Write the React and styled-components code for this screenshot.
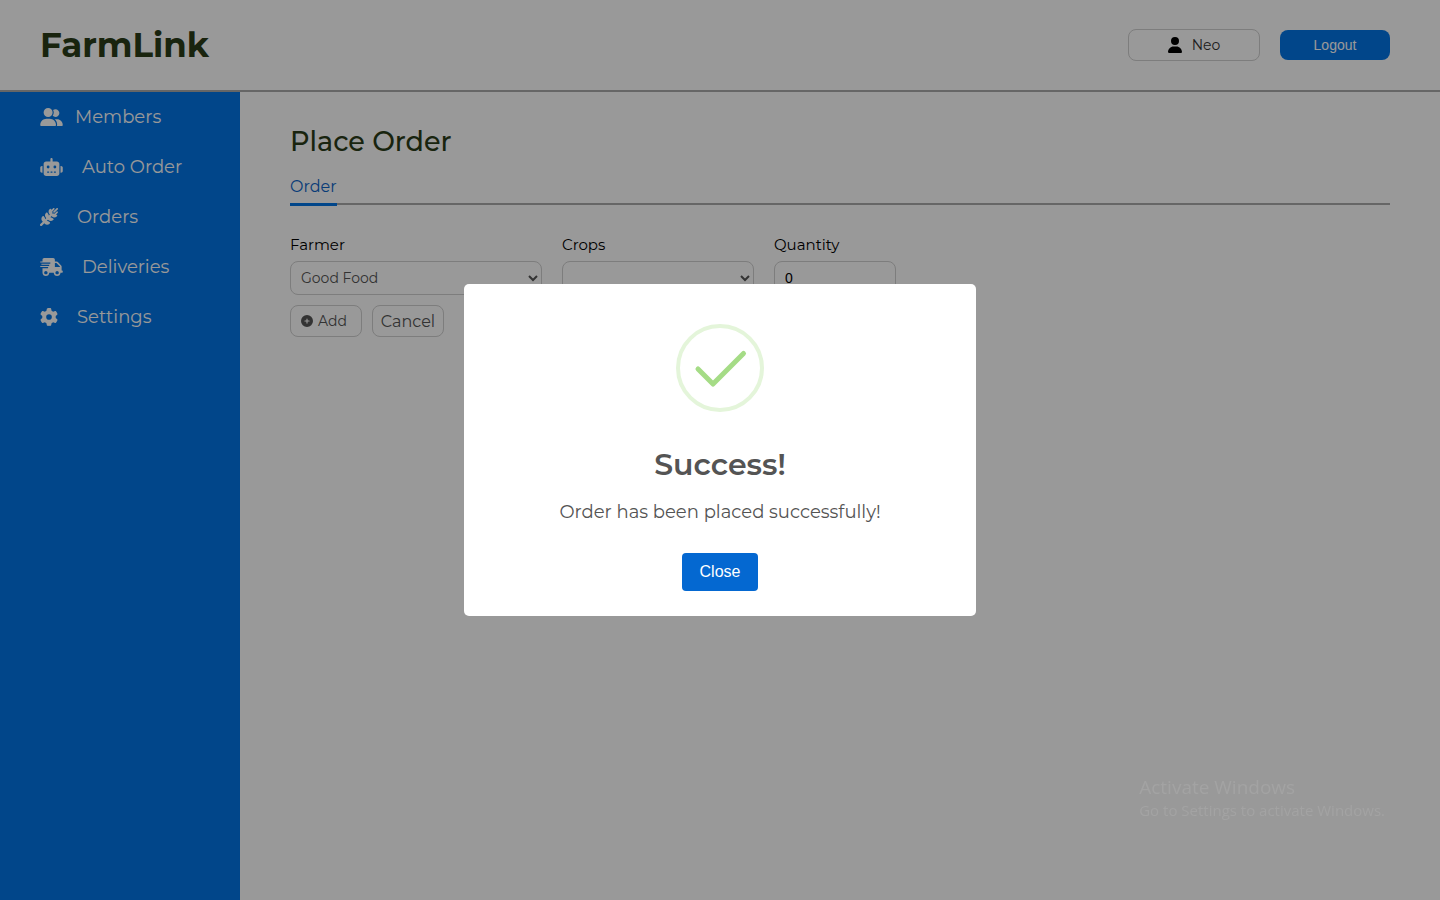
import React from "react";
import styled, { createGlobalStyle } from "styled-components";
import {
  FaUserGroup,
  FaRobot,
  FaWheatAwn,
  FaGear,
  FaUser,
  FaCirclePlus,
} from "react-icons/fa6";
import { FaShippingFast } from "react-icons/fa";

const blue = "#0375e6";
const sans = `Montserrat, Inter, "Noto Sans", sans-serif`;
const system = `"Liberation Sans", Arial, sans-serif`;

const GlobalStyle = createGlobalStyle`
  *, *::before, *::after { box-sizing: border-box; }
  body { margin: 0; background: #fff; font-family: ${sans}; color: #000; }
  button, input, select { margin: 0; font-family: inherit; }
`;

const Page = styled.div`
  min-height: 100vh;
  display: flex;
  flex-direction: column;
`;

const Header = styled.header`
  display: flex;
  align-items: center;
  justify-content: space-between;
  height: 92px;
  padding: 0 50px 0 40px;
  border-bottom: 2px solid #aaa;
`;

const Brand = styled.h1`
  margin: 0;
  font-size: 34px;
  line-height: 44px;
  font-weight: 700;
  color: #2b3c18;
`;

const HeaderActions = styled.div`
  display: flex;
  align-items: center;
  gap: 20px;
`;

const UserButton = styled.button`
  display: flex;
  align-items: center;
  justify-content: center;
  gap: 10px;
  width: 132px;
  height: 32px;
  border: 1px solid #d0d0d0;
  border-radius: 8px;
  background: #fff;
  color: #333;
  font-size: 14px;

  svg { width: 14px; height: 16px; color: #000; }
`;

const LogoutButton = styled.button`
  width: 110px;
  height: 30px;
  border: 0;
  border-radius: 8px;
  background: ${blue};
  color: #fff;
  font-family: ${system};
  font-size: 14px;
`;

const Body = styled.div`
  flex: 1;
  display: flex;
`;

const Sidebar = styled.nav`
  flex: 0 0 240px;
  display: flex;
  flex-direction: column;
  background: ${blue};
`;

const SideLink = styled.a`
  display: flex;
  align-items: center;
  gap: ${(p) => p.$gap}px;
  height: 50px;
  padding: 0 40px;
  color: #fff;
  font-size: 18px;
  line-height: 24px;
  font-weight: 400;
  text-decoration: none;
  white-space: nowrap;

  svg { flex: none; width: ${(p) => (p.$wide ? 23 : 18)}px; height: 18px; }
`;

const Main = styled.main`
  flex: 1;
  min-width: 0;
  padding: 32px 50px;
`;

const Title = styled.h2`
  margin: 0 0 16px;
  font-size: 27px;
  line-height: 36px;
  font-weight: 500;
  color: #2b3c18;
`;

const Tabs = styled.div`
  display: flex;
  height: 29px;
  border-bottom: 2px solid #aaa;
`;

const Tab = styled.a`
  height: 30px;
  border-bottom: 3px solid ${blue};
  color: #0d64c8;
  font-size: 16px;
  line-height: 22px;
  text-decoration: none;
`;

const Form = styled.form`
  margin-top: 30px;
`;

const Fields = styled.div`
  display: grid;
  grid-template-columns: 252px 192px 122px;
  gap: 20px;
`;

const Field = styled.label`
  display: flex;
  flex-direction: column;
  gap: 6px;
  font-size: 15px;
  line-height: 20px;
`;

const control = `
  width: 100%;
  height: 34px;
  border: 1px solid #d0d0d0;
  border-radius: 8px;
  background: #fff;
  font-size: 14px;
`;

const Select = styled.select`
  ${control}
  padding: 0 6px;
  color: #555;
`;

const NumberInput = styled.input`
  ${control}
  padding: 0 10px;
  color: #000;
  font-family: ${system};
`;

const FormActions = styled.div`
  display: flex;
  gap: 10px;
  margin-top: 10px;
`;

const FormButton = styled.button`
  display: flex;
  align-items: center;
  justify-content: ${(p) => (p.$large ? "center" : "flex-start")};
  gap: 5px;
  width: 72px;
  height: 32px;
  padding: 0 ${(p) => (p.$large ? 0 : 10)}px;
  border: 1px solid #d0d0d0;
  border-radius: 8px;
  background: #fff;
  color: #555;
  font-size: ${(p) => (p.$large ? 16 : 14)}px;

  svg { width: 12px; height: 12px; }
`;

const Overlay = styled.div`
  position: fixed;
  inset: 0;
  display: flex;
  align-items: center;
  justify-content: center;
  background: rgba(0, 0, 0, 0.4);
`;

const Dialog = styled.div`
  display: flex;
  flex-direction: column;
  align-items: center;
  width: 512px;
  max-width: 100%;
  padding: 40px 20px 25px;
  border-radius: 5px;
  background: #fff;
  color: #545454;
  text-align: center;
`;

const SuccessIcon = styled.svg`
  width: 88px;
  height: 88px;
`;

const DialogTitle = styled.h2`
  margin: 34px 0 0;
  font-size: 30px;
  line-height: 38px;
  font-weight: 600;
`;

const DialogText = styled.p`
  margin: 16px 0 0;
  font-size: 18px;
  line-height: 24px;
`;

const CloseButton = styled.button`
  width: 76px;
  height: 38px;
  margin-top: 29px;
  padding: 0;
  border: 0;
  border-radius: 4px;
  background: #0468d1;
  color: #fff;
  font-family: ${system};
  font-size: 16px;
`;

const Watermark = styled.aside`
  position: fixed;
  right: 55px;
  bottom: 80px;
  color: #a3a3a3;
  font-family: "Open Sans", "Noto Sans", sans-serif;
  font-size: 15px;
  line-height: 20px;
  pointer-events: none;
`;

const WatermarkTitle = styled.div`
  font-size: 19px;
  line-height: 26px;
`;

const links = [
  { label: "Members", Icon: FaUserGroup, gap: 12, wide: true },
  { label: "Auto Order", Icon: FaRobot, gap: 19, wide: true },
  { label: "Orders", Icon: FaWheatAwn, gap: 19 },
  { label: "Deliveries", Icon: FaShippingFast, gap: 19, wide: true },
  { label: "Settings", Icon: FaGear, gap: 19 },
];

export default function App() {
  return (
    <>
      <GlobalStyle />
      <Page>
        <Header>
          <Brand>FarmLink</Brand>
          <HeaderActions>
            <UserButton type="button"><FaUser />Neo</UserButton>
            <LogoutButton type="button">Logout</LogoutButton>
          </HeaderActions>
        </Header>
        <Body>
          <Sidebar>
            {links.map(({ label, Icon, gap, wide }) => (
              <SideLink key={label} href="#" $gap={gap} $wide={wide}><Icon />{label}</SideLink>
            ))}
          </Sidebar>
          <Main>
            <Title>Place Order</Title>
            <Tabs><Tab href="#">Order</Tab></Tabs>
            <Form>
              <Fields>
                <Field>
                  Farmer
                  <Select defaultValue="good"><option value="good">Good Food</option></Select>
                </Field>
                <Field>
                  Crops
                  <Select defaultValue=""><option value="" /></Select>
                </Field>
                <Field>
                  Quantity
                  <NumberInput type="number" defaultValue="0" />
                </Field>
              </Fields>
              <FormActions>
                <FormButton type="button"><FaCirclePlus />Add</FormButton>
                <FormButton type="button" $large>Cancel</FormButton>
              </FormActions>
            </Form>
          </Main>
        </Body>
      </Page>
      <Overlay>
        <Dialog role="dialog" aria-modal="true" aria-labelledby="dialog-title">
          <SuccessIcon viewBox="0 0 88 88" fill="none" aria-hidden="true">
            <circle cx="44" cy="44" r="42" stroke="#e4f5da" strokeWidth="4" />
            <path d="M22 45 37 60 67.500 29.500" stroke="#a5dc86" strokeWidth="5" strokeLinecap="round" strokeLinejoin="round" />
          </SuccessIcon>
          <DialogTitle id="dialog-title">Success!</DialogTitle>
          <DialogText>Order has been placed successfully!</DialogText>
          <CloseButton type="button">Close</CloseButton>
        </Dialog>
      </Overlay>
      <Watermark>
        <WatermarkTitle>Activate Windows</WatermarkTitle>
        Go to Settings to activate Windows.
      </Watermark>
    </>
  );
}
